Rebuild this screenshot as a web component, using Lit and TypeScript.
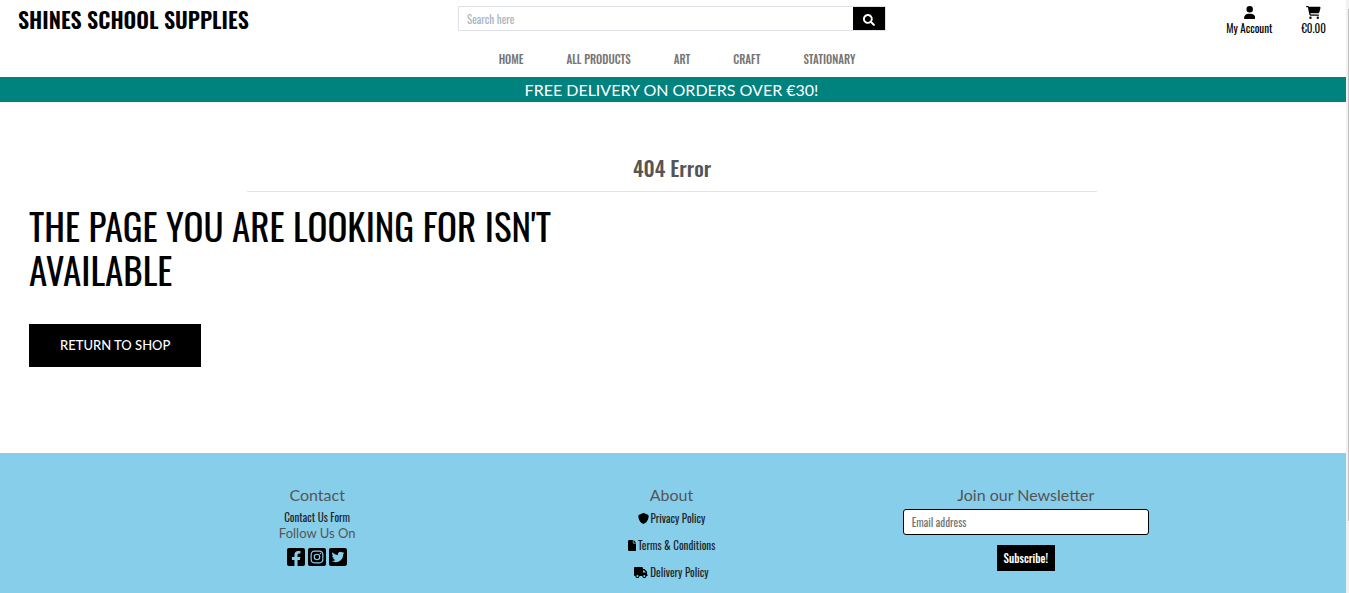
import { LitElement, html, css, svg } from "lit";
import { customElement } from "lit/decorators.js";

const icon = (viewBox: string, path: string) =>
  html`<svg class="icon" viewBox=${viewBox} aria-hidden="true">${svg`<path d=${path}></path>`}</svg>`;

const icons = {
  search: "M505 442.700L405.300 343c-4.500-4.500-10.600-7-17-7H372c27.600-35.300 44-79.700 44-128C416 93.100 322.900 0 208 0S0 93.100 0 208s93.100 208 208 208c48.300 0 92.700-16.400 128-44v16.300c0 6.400 2.500 12.500 7 17l99.700 99.700c9.400 9.400 24.600 9.400 33.900 0l28.300-28.300c9.400-9.400 9.400-24.600.1-34zM208 336c-70.700 0-128-57.200-128-128 0-70.700 57.200-128 128-128 70.700 0 128 57.200 128 128 0 70.700-57.200 128-128 128z",
  user: "M224 256A128 128 0 1 0 224 0a128 128 0 1 0 0 256zm-45.700 48C79.800 304 0 383.800 0 482.300C0 498.700 13.300 512 29.700 512H418.300c16.400 0 29.700-13.300 29.700-29.700C448 383.800 368.200 304 269.700 304H178.300z",
  cart: "M0 24C0 10.700 10.700 0 24 0H69.500c22 0 41.500 12.800 50.600 32h411c26.300 0 45.500 25 38.600 50.400l-41 152.300c-8.500 31.400-37 53.300-69.500 53.300H170.700l5.400 28.500c2.200 11.300 12.100 19.500 23.600 19.500H488c13.300 0 24 10.700 24 24s-10.700 24-24 24H199.700c-34.600 0-64.300-24.600-70.700-58.500L77.400 54.500c-.7-3.800-4-6.500-7.900-6.500H24C10.700 48 0 37.300 0 24zM128 464a48 48 0 1 1 96 0 48 48 0 1 1-96 0zm336-48a48 48 0 1 1 0 96 48 48 0 1 1 0-96z",
  facebook: "M400 32H48A48 48 0 0 0 0 80v352a48 48 0 0 0 48 48h137.250V327.690h-63V256h63v-54.640c0-62.150 37-96.480 93.670-96.480 27.140 0 55.520 4.840 55.520 4.840v61h-31.270c-30.810 0-40.420 19.120-40.420 38.730V256h68.780l-11 71.690h-57.780V480H400a48 48 0 0 0 48-48V80a48 48 0 0 0-48-48z",
  instagram: "M224 202.660A53.340 53.340 0 1 0 277.360 256 53.380 53.380 0 0 0 224 202.660zm124.710-41a54 54 0 0 0-30.410-30.410c-21-8.290-71-6.430-94.300-6.430s-73.250-1.930-94.310 6.430a54 54 0 0 0-30.410 30.410c-8.280 21-6.430 71.050-6.430 94.330s-1.850 73.270 6.470 94.340a54 54 0 0 0 30.410 30.410c21 8.290 71 6.430 94.310 6.430s73.240 1.930 94.300-6.430a54 54 0 0 0 30.410-30.410c8.350-21 6.430-71.050 6.430-94.330s1.920-73.260-6.430-94.330zM224 338a82 82 0 1 1 82-82 81.900 81.900 0 0 1-82 82zm85.380-148.300a19.140 19.140 0 1 1 19.130-19.140 19.100 19.100 0 0 1-19.130 19.140zM400 32H48A48 48 0 0 0 0 80v352a48 48 0 0 0 48 48h352a48 48 0 0 0 48-48V80a48 48 0 0 0-48-48zm-17.120 290c-1.290 25.630-7.140 48.340-25.850 67s-41.400 24.630-67 25.850c-26.410 1.490-105.590 1.490-132 0-25.630-1.290-48.260-7.150-67-25.850s-24.630-41.420-25.850-67c-1.490-26.420-1.490-105.610 0-132 1.290-25.630 7.070-48.340 25.850-67s41.470-24.560 67-25.780c26.410-1.490 105.590-1.490 132 0 25.630 1.290 48.330 7.150 67 25.850s24.630 41.420 25.850 67.050c1.490 26.320 1.490 105.440 0 131.880z",
  twitter: "M400 32H48C21.500 32 0 53.500 0 80v352c0 26.500 21.500 48 48 48h352c26.500 0 48-21.500 48-48V80c0-26.500-21.500-48-48-48zm-48.900 158.800c.2 2.800.2 5.700.2 8.500 0 86.700-66 186.600-186.600 186.600-37.200 0-71.700-10.800-100.700-29.400 5.300.6 10.400.8 15.800.8 30.700 0 58.900-10.400 81.400-28-28.800-.6-53-19.500-61.300-45.500 10.100 1.500 19.200 1.500 29.600-1.200-30-6.100-52.500-32.500-52.500-64.400v-.8c8.700 4.900 18.900 7.900 29.600 8.300a65.447 65.447 0 0 1-29.200-54.600c0-12.200 3.200-23.400 8.900-33.100 32.300 39.800 80.800 65.800 135.200 68.600-9.300-44.500 24-80.600 64-80.600 18.900 0 35.900 7.900 47.900 20.700 14.800-2.800 29-8.300 41.600-15.800-4.900 15.200-15.200 28-28.800 36.100 13.200-1.400 26-5.100 37.800-10.200-8.900 13.100-20.100 24.700-32.900 34z",
  shield: "M256 0c4.600 0 9.200 1 13.400 2.900L457.700 82.800c22 9.300 38.400 31 38.300 57.200c-.5 99.200-41.300 280.700-213.600 363.200c-16.700 8-36.100 8-52.800 0C57.300 420.700 16.500 239.200 16 140c-.1-26.200 16.300-47.900 38.300-57.200L242.700 2.900C246.800 1 251.400 0 256 0z",
  file: "M0 64C0 28.700 28.700 0 64 0H224V128c0 17.700 14.300 32 32 32H384V448c0 35.300-28.700 64-64 64H64c-35.300 0-64-28.700-64-64V64zm384 64H256V0L384 128z",
  truck: "M48 0C21.500 0 0 21.500 0 48V368c0 26.500 21.500 48 48 48H64c0 53 43 96 96 96s96-43 96-96H384c0 53 43 96 96 96s96-43 96-96h32c17.700 0 32-14.300 32-32s-14.300-32-32-32V288 256 237.300c0-17-6.700-33.300-18.700-45.300L512 114.700c-12-12-28.300-18.700-45.300-18.700H416V48c0-26.500-21.500-48-48-48H48zM416 160h50.700L544 237.300V256H416V160zM112 416a48 48 0 1 1 96 0 48 48 0 1 1-96 0zm368-48a48 48 0 1 1 0 96 48 48 0 1 1 0-96z",
};

@customElement("app-root")
export class AppRoot extends LitElement {
  static styles = css`
    :host {
      display: grid;
      grid-template-columns: minmax(0, 1fr) 3px;
      height: 100vh;
      overflow: hidden;
      background: #fff;
      color: #000;
      font-family: Oswald, "Roboto Condensed", "Liberation Sans Narrow", "Liberation Sans", sans-serif;
      font-size: 11px;
      line-height: 16px;
    }
    * { box-sizing: border-box; }
    a { color: inherit; text-decoration: none; }
    h1, h2, h3, p, ul { margin: 0; padding: 0; font-weight: 400; }
    ul { list-style: none; }
    input, button { font: inherit; border-radius: 0; margin: 0; }
    .icon { display: block; height: 12px; fill: currentColor; }
    .page { display: flex; flex-direction: column; min-height: 100vh; }
    .top {
      display: grid;
      grid-template-columns: 1fr 428px 1fr;
      align-items: start;
      padding: 6px 20px 0 18px;
      height: 46px;
    }
    .brand { font-size: 22px; line-height: 26px; font-weight: 600; }
    .search { display: flex; height: 25px; border: 1px solid #dee2e6; }
    .search input { flex: 1; min-width: 0; border: 0; padding: 1px 8px; outline: 0; }
    .search input::placeholder { color: #a9b5c1; opacity: 1; }
    .search button {
      display: grid; place-items: center; width: 32px; border: 0; padding: 2px 0 0;
      background: #000; color: #fff;
    }
    .account { display: flex; justify-content: flex-end; gap: 29px; }
    .account a { display: flex; flex-direction: column; align-items: center; gap: 1px; }
    .account .icon { height: 13px; }
    .nav { display: flex; justify-content: center; gap: 43px; height: 31px; padding: 5px 0 0 8px; color: #757575; font-weight: 500; }
    .banner { background: #00827f; color: #fff; text-align: center; font: 16px/26px Lato, sans-serif; height: 25px; padding-right: 3px; }
    .main { flex: 1; padding: 52px 31px 0 29px; }
    .title { text-align: center; color: #555; font-size: 21px; line-height: 28px; font-weight: 500; }
    .rule { width: 67%; max-width: 850px; margin: 9px auto 12px; border: 0; border-top: 1px solid #e3e3e3; }
    .message { max-width: 50%; font-size: 37px; line-height: 44px; text-transform: uppercase; }
    .shop {
      display: inline-block; margin-top: 32px; padding: 0 31px;
      background: #000; color: #fff; font: 500 13px/43px Lato, sans-serif;
    }
    .footer {
      display: grid; grid-template-columns: repeat(3, 1fr);
      height: 140px; padding: 33px calc(10.4% + 3px) 0 10.4%; background: #87ceeb; text-align: center; color: #212529;
    }
    .col { display: flex; flex-direction: column; align-items: center; }
    .head { font: 16px/18px Lato, sans-serif; color: #555; }
    .follow { font: 13px/16px Lato, sans-serif; color: #555; }
    .contact { margin-top: 6px; line-height: 15px; }
    .social { display: flex; gap: 3px; margin-top: 7px; color: #000; }
    .social .icon { height: 18px; }
    .links { display: grid; gap: 11px; margin-top: 6px; justify-items: center; }
    .links a { display: flex; align-items: center; gap: 2px; }
    .links .icon { height: 11px; color: #000; }
    .news { display: flex; flex-direction: column; align-items: center; gap: 10px; width: 246px; margin-top: 5px; }
    .news input { width: 100%; height: 26px; padding: 1px 8px; border: 1px solid #000; border-radius: 3px; background: #fff; }
    .news input::placeholder { color: #6c757d; opacity: 1; }
    .news button { height: 26px; padding: 1px 7px; border: 0; background: #000; color: #fff; font-weight: 500; }
    .track { padding-top: 9px; background: #f1f1f1; }
    .thumb { width: 1px; height: 512px; margin-left: auto; background: #c1c1c1; }
  `;

  render() {
    return html`
      <div class="page">
        <header>
          <div class="top">
            <a class="brand" href="#">SHINES SCHOOL SUPPLIES</a>
            <form class="search" role="search">
              <input type="text" aria-label="Search" placeholder="Search here" />
              <button type="button" aria-label="Search">${icon("0 0 512 512", icons.search)}</button>
            </form>
            <div class="account">
              <a href="#">${icon("0 0 448 512", icons.user)}<span>My Account</span></a>
              <a href="#">${icon("0 0 576 512", icons.cart)}<span>€0.00</span></a>
            </div>
          </div>
          <nav class="nav">
            ${["HOME", "ALL PRODUCTS", "ART", "CRAFT", "STATIONARY"].map((t) => html`<a href="#">${t}</a>`)}
          </nav>
          <p class="banner">FREE DELIVERY ON ORDERS OVER €30!</p>
        </header>
        <main class="main">
          <h2 class="title">404 Error</h2>
          <hr class="rule" />
          <h1 class="message">The page you are looking for isn't available</h1>
          <a class="shop" href="#">RETURN TO SHOP</a>
        </main>
        <footer class="footer">
          <section class="col">
            <h3 class="head">Contact</h3>
            <a class="contact" href="#">Contact Us Form</a>
            <p class="follow">Follow Us On</p>
            <div class="social">
              <a href="#" aria-label="Facebook">${icon("0 32 448 448", icons.facebook)}</a>
              <a href="#" aria-label="Instagram">${icon("0 32 448 448", icons.instagram)}</a>
              <a href="#" aria-label="Twitter">${icon("0 32 448 448", icons.twitter)}</a>
            </div>
          </section>
          <section class="col">
            <h3 class="head">About</h3>
            <ul class="links">
              <li><a href="#">${icon("0 0 512 512", icons.shield)}Privacy Policy</a></li>
              <li><a href="#">${icon("0 0 384 512", icons.file)}Terms &amp; Conditions</a></li>
              <li><a href="#">${icon("0 0 640 512", icons.truck)}Delivery Policy</a></li>
            </ul>
          </section>
          <section class="col">
            <h3 class="head">Join our Newsletter</h3>
            <form class="news">
              <input type="email" aria-label="Email address" placeholder="Email address" />
              <button type="button">Subscribe!</button>
            </form>
          </section>
        </footer>
      </div>
      <div class="track" aria-hidden="true"><div class="thumb"></div></div>
    `;
  }
}
